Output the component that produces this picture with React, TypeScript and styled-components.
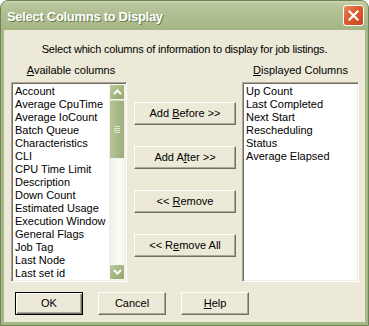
import React from 'react';
import styled, { createGlobalStyle } from 'styled-components';

const Global = createGlobalStyle`
  html, body { margin: 0; padding: 0; background: #ffffff; }
  body { font-family: "Liberation Sans", Arial, sans-serif; }
  * { box-sizing: border-box; }
`;

const Window = styled.div`
  width: 369px;
  height: 326px;
  display: flex;
  flex-direction: column;
  background: #a7b887;
  border: 1px solid #6f8156;
  border-radius: 8px 8px 0 0;
  overflow: hidden;
`;

const TitleBar = styled.div`
  height: 29px;
  flex: none;
  display: flex;
  align-items: center;
  padding: 0 4px 0 6px;
  background: linear-gradient(#cbd7b0 0px, #b9c79d 3px, #b0bf92 12px, #a9b989 24px, #a2b380 29px);
`;

const Title = styled.div`
  font-family: "Liberation Sans", Arial, sans-serif;
  font-weight: bold;
  font-size: 13px;
  color: #ffffff;
  text-shadow: 1px 1px 0 #6b7b4c;
  letter-spacing: -0.3px;
  padding-top: 1px;
`;

const CloseButton = styled.div`
  margin-left: auto;
  width: 21px;
  height: 21px;
  border: 1px solid #ffffff;
  border-radius: 3px;
  background: linear-gradient(135deg, #ec8a60 0%, #dc5f33 40%, #c9471f 100%);
  display: flex;
  align-items: center;
  justify-content: center;
`;

const Body = styled.div`
  flex: 1;
  margin: 0 3px 3px 3px;
  background: #ece9d8;
  display: flex;
  flex-direction: column;
  padding-top: 12px;
  font-size: 11px;
  line-height: 13px;
  color: #000;
`;

const Description = styled.div`
  text-align: center;
  letter-spacing: -0.2px;
  padding-top: 1px;
`;

const ColumnsRow = styled.div`
  display: flex;
  margin-top: 8px;
  padding-left: 7px;
`;

const ListColumn = styled.div<{ $w: number }>`
  width: ${p => p.$w}px;
  display: flex;
  flex-direction: column;
`;

const ListLabel = styled.div<{ $shift?: number }>`
  text-align: center;
  height: 13px;
  margin-bottom: 5px;
  padding-left: ${p => p.$shift ?? 0}px;
`;

const ListBox = styled.div`
  height: 200px;
  display: flex;
  background: #ffffff;
  border: 1px solid;
  border-color: #aca899 #ffffff #ffffff #aca899;
  box-shadow: inset 1px 1px 0 #716f64, inset -1px -1px 0 #f1efe2;
  padding: 1px;
`;

const Items = styled.div`
  flex: 1;
  overflow: hidden;
  padding: 1px 2px 0;
`;

const Item = styled.div`
  height: 13px;
  line-height: 13px;
  white-space: nowrap;
`;

const ScrollBar = styled.div`
  width: 16px;
  flex: none;
  display: flex;
  flex-direction: column;
  background: linear-gradient(to right, #eeede5, #fdfdf9 60%, #f4f3ec);
`;

const ScrollButton = styled.div`
  width: 16px;
  height: 16px;
  flex: none;
  border: 1px solid #f4f7ee;
  border-radius: 2px;
  background: linear-gradient(135deg, #bccb9f, #a2b47f 60%, #93a66e);
  display: flex;
  align-items: center;
  justify-content: center;
`;

const Thumb = styled.div`
  height: 59px;
  flex: none;
  border: 1px solid #eef3e3;
  border-top: 1px solid #cfe0a8;
  border-radius: 2px;
  background: linear-gradient(to right, #b6c598, #a8b98a 50%, #9cae7b);
  display: flex;
  flex-direction: column;
  align-items: center;
  justify-content: center;
  gap: 1px;
`;

const Grip = styled.div`
  width: 6px;
  height: 1px;
  background: #dfe8cc;
`;

const ScrollSpacer = styled.div`
  flex: 1;
`;

const MiddleColumn = styled.div`
  width: 102px;
  margin: 0 6px 0 7px;
  padding-top: 38px;
  display: flex;
  flex-direction: column;
  gap: 21px;
`;

const Button = styled.div<{ $w?: number; $default?: boolean }>`
  width: ${p => p.$w ?? 102}px;
  height: 23px;
  flex: none;
  display: flex;
  align-items: center;
  justify-content: center;
  background: #ece9d8;
  border: 1px solid;
  border-color: ${p => (p.$default ? '#000000' : '#ffffff #716f64 #716f64 #ffffff')};
  box-shadow: ${p =>
    p.$default
      ? 'inset 1px 1px 0 #ffffff, inset -1px -1px 0 #716f64, inset -2px -2px 0 #aca899'
      : 'inset -1px -1px 0 #aca899'};
  white-space: nowrap;
`;

const BottomRow = styled.div`
  display: flex;
  margin-top: 10px;
  padding-left: 11px;
  gap: 15px;
`;

const available = [
  'Account',
  'Average CpuTime',
  'Average IoCount',
  'Batch Queue',
  'Characteristics',
  'CLI',
  'CPU Time Limit',
  'Description',
  'Down Count',
  'Estimated Usage',
  'Execution Window',
  'General Flags',
  'Job Tag',
  'Last Node',
  'Last set id',
  'Last Started',
];

const displayed = ['Up Count', 'Last Completed', 'Next Start', 'Rescheduling', 'Status', 'Average Elapsed'];

const Chevron = ({ down }: { down?: boolean }) => (
  <svg width="9" height="6" viewBox="0 0 9 6">
    <polyline
      points={down ? '1,1 4.5,4.5 8,1' : '1,5 4.5,1.5 8,5'}
      fill="none"
      stroke="#ffffff"
      strokeWidth="2"
    />
  </svg>
);

export default function App() {
  return (
    <>
      <Global />
      <Window>
        <TitleBar>
          <Title>Select Columns to Display</Title>
          <CloseButton>
            <svg width="11" height="11" viewBox="0 0 11 11">
              <path d="M1.5 1.5 L9.5 9.5 M9.5 1.5 L1.5 9.5" stroke="#ffffff" strokeWidth="2.2" strokeLinecap="square" />
            </svg>
          </CloseButton>
        </TitleBar>
        <Body>
          <Description>Select which columns of information to display for job listings.</Description>
          <ColumnsRow>
            <ListColumn $w={116}>
              <ListLabel $shift={4}>
                <u>A</u>vailable columns
              </ListLabel>
              <ListBox>
                <Items>
                  {available.map(a => (
                    <Item key={a}>{a}</Item>
                  ))}
                </Items>
                <ScrollBar>
                  <ScrollButton>
                    <Chevron />
                  </ScrollButton>
                  <Thumb>
                    <Grip />
                    <Grip />
                    <Grip />
                    <Grip />
                  </Thumb>
                  <ScrollSpacer />
                  <ScrollButton>
                    <Chevron down />
                  </ScrollButton>
                </ScrollBar>
              </ListBox>
            </ListColumn>
            <MiddleColumn>
              <Button>
                Add&nbsp;<u>B</u>efore &gt;&gt;
              </Button>
              <Button>
                Add A<u>f</u>ter &gt;&gt;
              </Button>
              <Button>
                &lt;&lt;&nbsp;<u>R</u>emove
              </Button>
              <Button>
                &lt;&lt; R<u>e</u>move All
              </Button>
            </MiddleColumn>
            <ListColumn $w={117}>
              <ListLabel $shift={-8}>
                <u>D</u>isplayed Columns
              </ListLabel>
              <ListBox>
                <Items>
                  {displayed.map(d => (
                    <Item key={d}>{d}</Item>
                  ))}
                </Items>
              </ListBox>
            </ListColumn>
          </ColumnsRow>
          <BottomRow>
            <Button $w={68} $default>
              OK
            </Button>
            <Button $w={68}>Cancel</Button>
            <Button $w={68}>
              <u>H</u>elp
            </Button>
          </BottomRow>
        </Body>
      </Window>
    </>
  );
}
